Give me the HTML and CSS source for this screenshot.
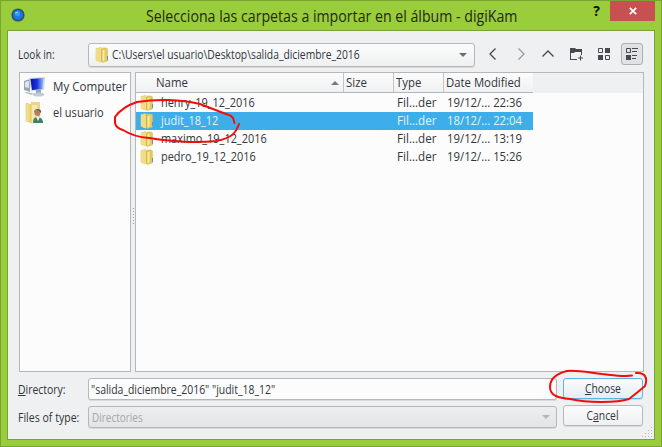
FILE: index.html
```html
<!DOCTYPE html>
<html lang="es">
<head>
<meta charset="utf-8">
<title>Selecciona las carpetas a importar en el álbum - digiKam</title>
<link rel="stylesheet" href="styles.css">
</head>
<body>
<svg class="defs" width="0" height="0">
  <defs>
    <linearGradient id="gold" x1="0" x2="1"><stop offset="0" stop-color="#f6e69c"/><stop offset=".6" stop-color="#efd670"/><stop offset="1" stop-color="#dcba50"/></linearGradient>
    <linearGradient id="screen" x1="0" x2="1"><stop offset="0" stop-color="#0712a0"/><stop offset=".5" stop-color="#1b34dc"/><stop offset="1" stop-color="#9cb9ff"/></linearGradient>
    <symbol id="folder" viewBox="0 0 14 16">
      <path d="M1 1.500l5-1v14l-5-1z" fill="url(#gold)" stroke="#e3cb78" stroke-width=".6"/>
      <path d="M7 1h4.500l1 1v12l-5.500 1.500z" fill="#e6c85f" stroke="#d6b85c" stroke-width=".5"/>
      <path d="M3 2l3-1v14.500l-3-.8z" fill="#f2dc80"/>
      <path d="M6.500 2v13" stroke="#d0ac48" stroke-width=".8"/>
      <path d="M7.500 3h2v10l-2 2z" fill="#f9eba0"/>
      <path d="M12 9h1v4h-1z" fill="#5b98be"/>
    </symbol>
  </defs>
</svg>
<div class="window">
  <header class="titlebar">
    <svg class="lens" width="14" height="14" viewBox="0 0 14 14"><circle cx="7" cy="7" r="6.600" fill="#34506b"/><circle cx="7" cy="7" r="4.900" fill="#1878e0"/><circle cx="6.500" cy="6" r="2.500" fill="#2e9bff"/><path d="M4 5l3-1" stroke="#a8dcff"/></svg>
    <h1><span class="t-title">Selecciona las carpetas a importar en el álbum - digiKam</span></h1>
    <span class="help">?</span>
    <div class="close"><svg width="8" height="8" viewBox="0 0 8 8"><path d="M.8.8l6.400 6.400M7.200.8L.8 7.200" stroke="#fff" stroke-width="1.700"/></svg></div>
  </header>
  <main class="dialog">
    <div class="lookin">
      <label><span class="t-look">Look in:</span></label>
      <div class="combo path"><svg width="14" height="16"><use href="#folder"/></svg><span class="t-path">C:\Users\el usuario\Desktop\salida_diciembre_2016</span><i class="arrow"></i></div>
      <nav class="tools">
        <div><svg width="16" height="16" viewBox="0 0 16 16"><path d="M10.500 2.500L5 8l5.500 5.500" class="line"/></svg></div>
        <div><svg width="16" height="16" viewBox="0 0 16 16"><path d="M5.500 2.500L11 8l-5.500 5.500" class="line dim"/></svg></div>
        <div><svg width="16" height="16" viewBox="0 0 16 16"><path d="M2.500 10.500L8 5l5.500 5.500" class="line"/></svg></div>
        <div><svg width="16" height="16" viewBox="0 0 16 16"><path d="M2 2h5l1 1h6v6h-1V6H7L6 7H3v6h6v1H2z" fill="#444a4d"/><path d="M12.500 9.500v5M10 12h5" stroke="#444a4d"/></svg></div>
        <div><svg width="16" height="16" viewBox="0 0 16 16"><path d="M2.500 2.500h4v4h-4zM9.500 9.500h4v4h-4z" fill="none" stroke="#444a4d"/><path d="M9 2h5v5H9zM2 9h5v5H2z" fill="#444a4d"/></svg></div>
        <div class="pressed"><svg width="16" height="16" viewBox="0 0 16 16"><path d="M2.500 2.500h4v4h-4z" fill="none" stroke="#444a4d"/><path d="M2 9h5v5H2z" fill="#444a4d"/><path d="M8 2.500h6M8 5.500h5M8 9.500h5M8 12.500h4" stroke="#444a4d"/></svg></div>
      </nav>
    </div>
    <div class="panes">
      <aside class="places">
        <div class="place"><svg width="24" height="22" viewBox="0 0 24 22"><path d="M1 5l6-2v13l-6-2z" fill="#9ba8b4"/><path d="M2 6l4-1v7l-4-1z" fill="#dce6ed"/><path d="M6 2l16-1-1 13L8 15z" fill="#cbd8e7"/><path d="M7.500 3L20.500 2l-1 11L9 14z" fill="url(#screen)"/><path d="M13 14l5-.5v4l-5 .5z" fill="#9baab7"/><ellipse cx="15.500" cy="18.500" rx="6" ry="2" fill="#c1cbd3"/><path d="M2 16l8 1-1 2-7-2z" fill="#b4c2cd"/></svg><span class="t-comp">My Computer</span></div>
        <div class="place"><svg width="24" height="24" viewBox="0 0 24 24"><path d="M3 2l6 2v18l-6-2z" fill="url(#gold)" stroke="#d5bb70" stroke-width=".5"/><path d="M8 1h9v19l-9 2z" fill="#ead58a"/><path d="M9 4h5v17l-5 2z" fill="#f6e7ac"/><path d="M10 22q0-6 4-6 6 0 6 6z" fill="#3b8069"/><circle cx="14.500" cy="12" r="3" fill="#b48065"/><path d="M11 12q0-4 3.500-4 4.500 0 3.500 4l-2-2-3-1z" fill="#6b614e"/><path d="M13 16l2 4 2-4z" fill="#eceeda"/></svg><span class="t-user">el usuario</span></div>
      </aside>
      <div class="splitter"><i></i><i></i><i></i><i></i><i></i><i></i></div>
      <section class="files">
        <div class="row head"><span class="name"><b class="t-h">Name</b><i class="sort"></i></span><span><b class="t-h">Size</b></span><span><b class="t-h">Type</b></span><span><b class="t-date">Date Modified</b></span></div>
        <div class="row"><span class="name"><svg width="14" height="16"><use href="#folder"/></svg><b class="t-f">henry_19_12_2016</b></span><span></span><span><b class="t-type">Fil...der</b></span><span><b class="t-time">19/12/... 22:36</b></span></div>
        <div class="row selected"><span class="name"><svg width="14" height="16"><use href="#folder"/></svg><b class="t-f">judit_18_12</b></span><span></span><span><b class="t-type">Fil...der</b></span><span><b class="t-time">18/12/... 22:04</b></span></div>
        <div class="row"><span class="name"><svg width="14" height="16"><use href="#folder"/></svg><b class="t-f">maximo_19_12_2016</b></span><span></span><span><b class="t-type">Fil...der</b></span><span><b class="t-time">19/12/... 13:19</b></span></div>
        <div class="row"><span class="name"><svg width="14" height="16"><use href="#folder"/></svg><b class="t-f">pedro_19_12_2016</b></span><span></span><span><b class="t-type">Fil...der</b></span><span><b class="t-time">19/12/... 15:26</b></span></div>
      </section>
    </div>
    <div class="form">
      <label><span class="t-dir"><u>D</u>irectory:</span></label><div class="input"><span class="t-val">"salida_diciembre_2016" "judit_18_12"</span></div><button class="primary"><span class="t-btn"><u>C</u>hoose</span></button>
      <label><span class="t-fot">Files of type:</span></label><div class="combo disabled"><span class="t-dis">Directories</span><i class="arrow"></i></div><button class="cancel"><span class="t-btn">C<u>a</u>ncel</span></button>
    </div>
    <svg class="grip" width="11" height="11" viewBox="0 0 11 11"><path d="M9 .5h1M6 3.500h1M9 3.500h1M3 6.500h1M6 6.500h1M9 6.500h1M0 9.500h1M3 9.500h1M6 9.500h1M9 9.500h1" stroke="#b5b7b9"/></svg>
  </main>
  <svg class="marks" width="662" height="447" viewBox="0 0 662 447"><path d="M234.500 123L233 118Q231 115 226 114Q213 109 200 104C181 99 155 99 137 102Q122 107 115 117V123Q116 128 123 130Q134 137 149 138C171 142 198 143 216 141C233 138 236 132 239 124"/><path d="M632 375.500C624 377 612 375 602 374C586 372 576 370 567 371C555 374 550 379 550 387C550 396 559 398 570 399C587 403 617 403 629 399Q638 392 645 386C648 378 645 372 636 373"/></svg>
</div>
</body>
</html>
```
FILE: styles.css
```css
* { box-sizing: border-box; }
body { margin: 0; font: 12px/18px "Open Sans", "Noto Sans", sans-serif; color: #31363b; overflow: hidden; }
.defs { position: absolute; }
.window { position: relative; width: 662px; height: 447px; border: 1px solid #7ba333; background: #9acd3c; padding: 0 6px 6px; }
.titlebar { height: 29px; display: flex; align-items: flex-start; color: #222a16; }
.lens { margin: 7px 0 0 4px; flex: none; }
h1 { margin: 4px 0 0; flex: 1; padding-left: 121px; font-size: 15px; font-weight: 400; line-height: 22px; white-space: nowrap; }
.help { font-size: 14px; font-weight: 700; line-height: 20px; margin-right: 10px; color: #111; }
.close { width: 45px; height: 20px; background: #c75050; display: grid; place-items: center; }
.dialog { position: relative; height: 410px; border: 1px solid #7ba333; background: #eff0f1; padding: 11px 10px 0 11px; }
.lookin { display: flex; align-items: center; height: 25px; }
.lookin label { width: 69px; margin-left: -1px; margin-right: 1px; }
.combo, .input, button { border: 1px solid #b5b7b9; border-radius: 3px; background: linear-gradient(#fcfcfc, #eef0f1); box-shadow: 0 1px 0 #d7d9da; display: flex; align-items: center; white-space: nowrap; }
.path { width: 387px; height: 24px; padding: 0 7px 0 6px; }
.path span { margin-left: 3px; }
.arrow { margin-left: auto; border: 4px solid transparent; border-top-color: #6a6e72; border-bottom: 0; }
.tools { display: flex; margin: -2px 0 0 6px; gap: 4px; }
.tools div { width: 24px; height: 24px; display: grid; place-items: center; }
.tools div:nth-child(n+3) { margin-left: -1px; margin-right: 1px; }
.tools div.pressed { width: 22px; height: 22px; margin: 1px 0 0; background: #e1e2e3; border: 1px solid #aeb0b2; border-radius: 3px; }
.line { fill: none; stroke: #44494d; stroke-width: 1.3; }
.dim { stroke: #969a9d; }
.panes { display: flex; height: 300px; margin-top: 5px; }
.places { width: 112px; border: 1px solid #b5b7b9; background: #fcfcfc; padding-top: 1px; }
.place { display: flex; align-items: center; height: 26px; padding-left: 3px; white-space: nowrap; }
.place span { margin-left: 6px; }
.splitter { width: 4px; display: flex; flex-direction: column; align-items: center; justify-content: center; gap: 2px; padding-bottom: 12px; }
.splitter i { width: 1px; height: 1px; background: #9b9fa2; }
.files { flex: 1; border: 1px solid #b5b7b9; background: linear-gradient(#eff0f1 20px, #fcfcfc 20px); }
.row { width: 397px; height: 18px; display: grid; grid-template-columns: 207px 50px 50px 90px; white-space: nowrap; }
.row span { display: flex; align-items: center; padding-left: 4px; min-width: 0; }
b { font-weight: 400; }
.row .name b { margin-left: 7px; }
.row.head { height: 20px; background: linear-gradient(#fcfcfc, #f0f1f2); border-bottom: 1px solid #b5b7b9; margin-bottom: 1px; }
.head span { border-left: 1px solid #c3c5c7; padding-left: 2px; }
.head .name { border: 0; }
.head .name b { margin-left: 18px; }
.sort { margin: 0 4px 0 auto; border: 4px solid transparent; border-bottom-color: #777b7f; border-top: 0; }
.selected { background: #3daee9; color: #e4f3fb; }
.form { display: grid; grid-template-columns: 69px 469px 80px; row-gap: 6px; margin-top: 6px; }
.form label { line-height: 23px; height: 22px; white-space: nowrap; margin-left: -1px; }
.form .input, .form .combo { height: 22px; }
.input { background: #fcfcfc; padding: 2px 0 0 2px; }
.disabled { padding: 0 6px 0 3px; background: linear-gradient(#edeeef, #e3e4e5); color: #a5a7a9; }
.disabled span { margin-top: 2px; }
.disabled .arrow { border-top-color: #b3b5b7; }
button { margin-left: 6px; width: 80px; height: 21px; padding: 0; justify-content: center; font: inherit; color: inherit; }
.primary { border-color: #5db5e1; background: linear-gradient(#fbfcfd, #e5edf2); }
.cancel { margin-top: -1px; }
.grip { position: absolute; right: 1px; bottom: 1px; }
.marks { position: absolute; left: -1px; top: -1px; pointer-events: none; fill: none; stroke: #f20d0d; stroke-width: 2; stroke-linecap: round; stroke-linejoin: round; }

/* Condensed label widths */
[class^="t-"] { display: inline-block; transform-origin: left center; }
.t-title { transform: scale(.944, 1.06); }
.t-look { transform: scaleX(.84); }
.t-path { transform: scaleX(.86); }
.t-comp { transform: scaleX(.965); }
.t-user { transform: scaleX(.92); }
.t-h { transform: scaleX(.95); }
.t-date { transform: scaleX(.945); }
.t-f { transform: scaleX(.91); }
.t-type { transform: scaleX(.97); }
.t-time { transform: scaleX(.945); }
.t-dir, .t-val { transform: scaleX(.87); }
.t-fot { transform: scaleX(.88); }
.t-dis { transform: scaleX(.83); }
[class="t-btn"] { transform: scaleX(.86); transform-origin: center; }
```
